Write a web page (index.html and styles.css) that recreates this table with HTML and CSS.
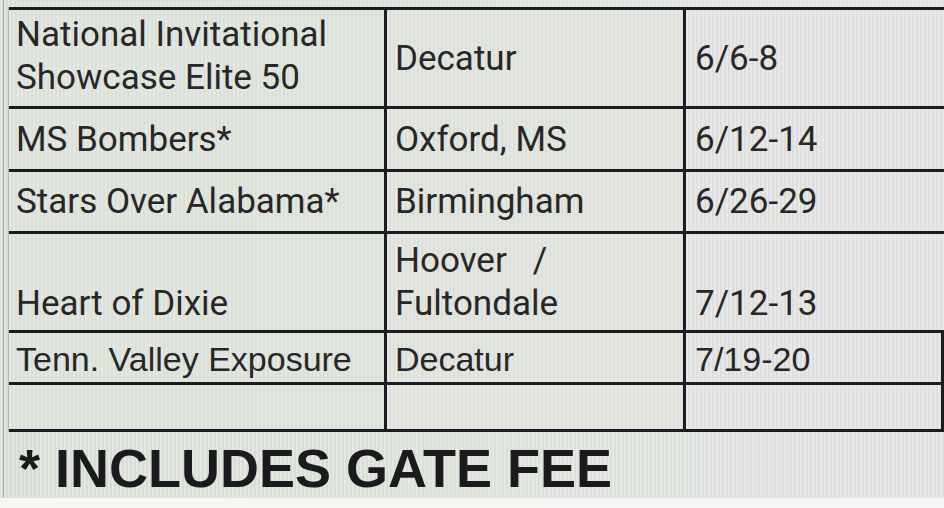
FILE: index.html
```html
<!DOCTYPE html>
<html lang="en">
<head>
<meta charset="utf-8">
<title>Tournament schedule</title>
<link rel="stylesheet" href="styles.css">
</head>
<body>
<div class="sheet">
  <div class="grid">
    <div class="cell c1 top">National Invitational<br>Showcase Elite 50</div>
    <div class="cell c2 mid">Decatur</div>
    <div class="cell c3 mid open">6/6-8</div>

    <div class="cell c1 mid">MS Bombers*</div>
    <div class="cell c2 mid">Oxford, MS</div>
    <div class="cell c3 mid open">6/12-14</div>

    <div class="cell c1 mid">Stars Over Alabama*</div>
    <div class="cell c2 mid">Birmingham</div>
    <div class="cell c3 mid open">6/26-29</div>

    <div class="cell c1 bot">Heart of Dixie</div>
    <div class="cell c2 bot">Hoover&nbsp;&nbsp; /<br>Fultondale</div>
    <div class="cell c3 bot open">7/12-13</div>

    <div class="cell c1 mid arial">Tenn. Valley Exposure</div>
    <div class="cell c2 mid arial">Decatur</div>
    <div class="cell c3 mid arial">7/19-20</div>

    <div class="cell c1"></div>
    <div class="cell c2"></div>
    <div class="cell c3"></div>
  </div>
  <p class="note">* INCLUDES GATE FEE</p>
</div>
</body>
</html>
```

FILE: styles.css
```css
html, body {
  margin: 0;
  padding: 0;
  background: #f6f7f5;
}

.sheet {
  position: relative;
  width: 944px;
  height: 498px;
  overflow: hidden;
  padding-top: 7px;
  box-sizing: border-box;
  background:
    repeating-linear-gradient(90deg, rgba(255,255,255,0.16) 0 2px, rgba(90,100,90,0.035) 2px 4px),
    linear-gradient(90deg, #dbe2d9 0%, #dfe4dc 45%, #e2e4e3 100%);
}

.sheet::before {
  content: "";
  position: absolute;
  left: 3px;
  top: 0;
  bottom: 0;
  width: 1px;
  background: #a8aeaa;
}

.grid {
  margin-left: 8px;
  display: grid;
  grid-template-columns: 375px 296px 255px;
  grid-template-rows: 96px 60px 59px 96px 49px 44px;
  gap: 3px;
  padding: 3px 3px 3px 0;
  background: #1b1c22;
  border-left: 1px solid #b4b9b4;
}

.cell {
  background:
    repeating-linear-gradient(90deg, rgba(255,255,255,0.16) 0 2px, rgba(90,100,90,0.035) 2px 4px),
    #dfe4dc;
  font-family: Roboto, "Liberation Sans", sans-serif;
  font-size: 35px;
  line-height: 43px;
  color: #272727;
  display: flex;
  flex-direction: column;
  white-space: nowrap;
}

.c2 { background-color: #e0e4dd; }
.c3 { background-color: #e2e4e2; }

.open { margin-right: -3px; }

.c1 { padding-left: 7px; }
.c2 { padding-left: 8px; }
.c3 { padding-left: 9px; }

.top { justify-content: flex-start; padding-top: 3px; }
.mid { justify-content: center; }
.bot { justify-content: flex-end; padding-bottom: 5px; }

.arial {
  font-family: "Liberation Sans", Arial, sans-serif;
  font-size: 34px;
  line-height: 40px;
  padding-top: 2px;
}

.note {
  margin: 5px 0 0 19px;
  font-family: "Liberation Sans", Arial, sans-serif;
  font-weight: bold;
  font-size: 54px;
  line-height: 62px;
  color: #1b1b1d;
  white-space: nowrap;
}
```
